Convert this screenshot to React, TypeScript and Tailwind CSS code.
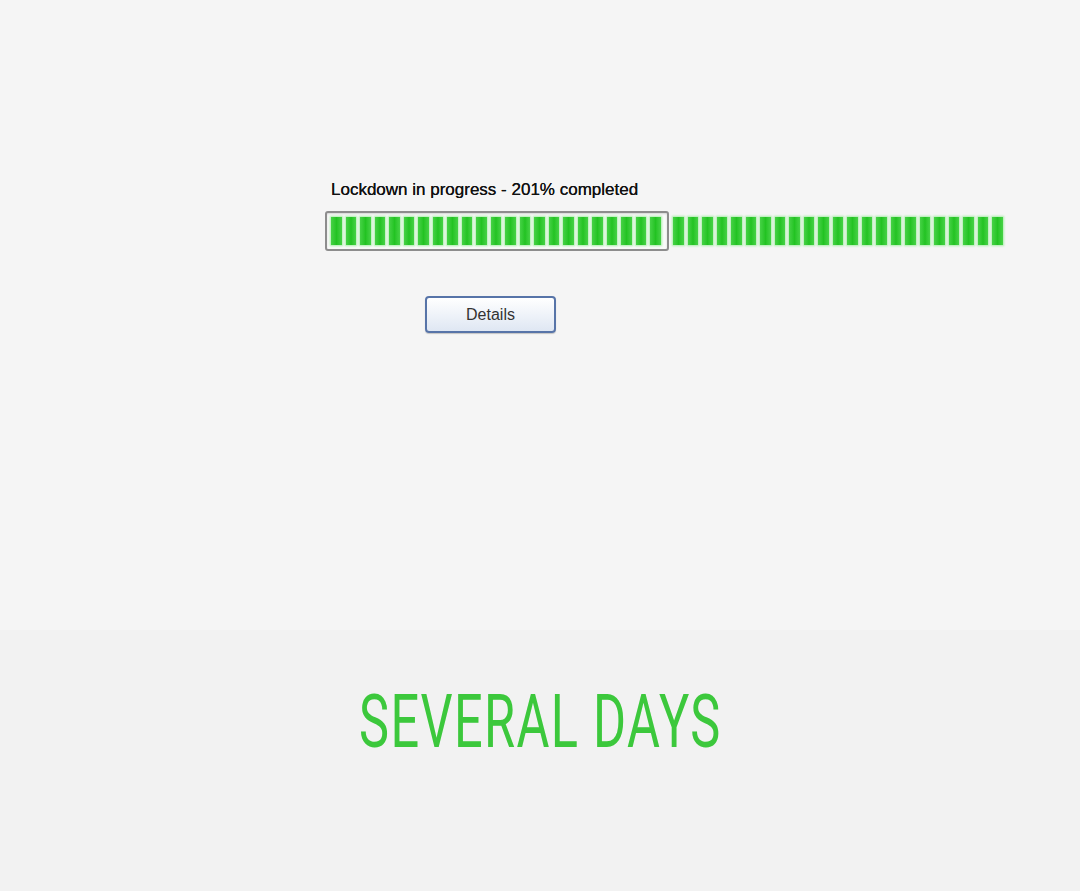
const INSIDE = Array.from({ length: 23 });
const OUTSIDE = Array.from({ length: 23 });

function Segment() {
  return (
    <span className="block h-[28px] w-[10.5px] shrink-0 bg-gradient-to-r from-[#45d245] via-[#22c322] to-[#45d245] shadow-[0_0_2px_1px_#a8eea8]" />
  );
}

export default function App() {
  return (
    <div className="flex h-[891px] w-[1080px] flex-col bg-[#f2f2f2]" style={{ fontFamily: "'Liberation Sans', Arial, sans-serif" }}>
      {/* the captured dialog — slightly lighter, like a photographed screen */}
      <section className="h-[630px] bg-[#f5f5f5] pl-[325px] pt-[181px]">
        <p className="ml-[6px] text-[17px] leading-[18px] text-[#111] [text-shadow:0_0_0.4px_#111]">
          Lockdown in progress - 201% completed
        </p>

        <div className="mt-[12px] flex items-center">
          <div className="flex h-[40px] w-[344px] shrink-0 items-center gap-[4px] rounded-[3px] border-2 border-[#8d8d8d] bg-[#fafafa] px-[4px] shadow-[inset_0_1px_2px_rgba(0,0,0,0.15)]">
            {INSIDE.map((_, i) => (
              <Segment key={i} />
            ))}
          </div>
          {/* overflow — the bar keeps going past its box */}
          <div className="ml-[4px] flex items-center gap-[4px]">
            {OUTSIDE.map((_, i) => (
              <Segment key={i} />
            ))}
          </div>
        </div>

        <button className="ml-[100px] mt-[45px] flex h-[37px] w-[131px] items-center justify-center rounded-[4px] border-2 border-[#5774a8] bg-gradient-to-b from-[#ffffff] to-[#dfe7f3] text-[16px] text-[#333] shadow-[0_1px_1px_rgba(0,0,0,0.2)]">
          Details
        </button>
      </section>

      <div className="flex flex-1 justify-center pt-[53px]">
        <h1
          className="inline-block origin-center scale-x-[0.673] text-[75px] leading-[76px] tracking-[2px] text-[#3cc83c]"
          style={{ fontFamily: "Roboto, 'Liberation Sans', sans-serif" }}
        >
          SEVERAL DAYS
        </h1>
      </div>
    </div>
  );
}
